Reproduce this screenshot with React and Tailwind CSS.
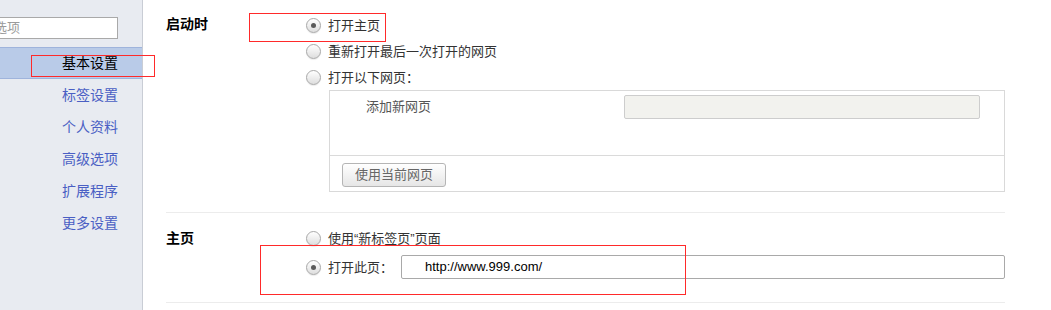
import React from "react";

const navItems = ["基本设置", "标签设置", "个人资料", "高级选项", "扩展程序", "更多设置"];

function Radio({ checked }) {
  return (
    <span className="flex h-[15px] w-[15px] shrink-0 items-center justify-center rounded-full border border-[#a8a8a8] bg-gradient-to-b from-white to-[#dedede] shadow-[0_1px_1px_rgba(0,0,0,0.08)]">
      {checked && <span className="h-[5px] w-[5px] rounded-full bg-[#5a5a5a]" />}
    </span>
  );
}

function Option({ checked, label, children, h = "h-[26px]" }) {
  return (
    <div className={`flex ${h} items-center`}>
      <Radio checked={checked} />
      <span className="ml-[7px] text-[13px] leading-none text-[#333]">{label}</span>
      {children}
    </div>
  );
}

export default function App() {
  return (
    <div
      className="relative flex h-[310px] w-[1051px] overflow-hidden bg-white"
      style={{ fontFamily: "'Liberation Sans', 'Noto Sans CJK SC', sans-serif" }}
    >
      {/* sidebar */}
      <div className="w-[143px] shrink-0 border-r border-[#c9cdd5] bg-[#e8ebf1] pt-[17px]">
        <div className="ml-[-37px] flex h-[22px] w-[155px] items-center border border-[#a9a9a9] bg-white pl-[4px] text-[13px] text-[#9a9a9a]">
          搜索选项
        </div>
        <div className="mt-[8px]">
          {navItems.map((item, i) => (
            <div
              key={item}
              className={
                i === 0
                  ? "flex h-[32px] items-center justify-end border-y border-[#9fb4dc] bg-[#b9cbe8] pr-[24px] text-[14px] text-black"
                  : "flex h-[32px] items-center justify-end pr-[24px] text-[14px] text-[#4a5fc4]"
              }
            >
              {item}
            </div>
          ))}
        </div>
      </div>

      {/* main */}
      <div className="w-[862px] pl-[23px]">
        <div className="w-[839px]">
          <div className="flex pt-[12px]">
            <div className="w-[140px] pt-[5px] text-[14px] font-bold leading-none text-black">启动时</div>
            <div className="flex-1">
              <Option checked label="打开主页" />
              <Option label="重新打开最后一次打开的网页" />
              <Option label="打开以下网页：" />
              <div className="ml-[23px] border border-[#d9d9d9]">
                <div className="flex h-[64px] items-start pt-[4px]">
                  <div className="flex h-[24px] items-center pl-[36px] text-[13px] text-[#555]">添加新网页</div>
                  <div className="ml-auto mr-[24px] h-[24px] w-[356px] rounded-[2px] border border-[#cdcdcd] bg-[#f2f2ee]" />
                </div>
                <div className="h-[36px] border-t border-[#dadada] pl-[12px] pt-[6px]">
                  <button className="h-[24px] w-[104px] rounded-[3px] border border-[#b5b5b5] bg-gradient-to-b from-white to-[#e6e6e6] text-[13px] leading-none text-[#666]">
                    使用当前网页
                  </button>
                </div>
              </div>
            </div>
          </div>

          <div className="mt-[20px] flex border-t border-[#ececec] pb-[19px] pt-[12px]">
            <div className="w-[140px] pt-[6px] text-[14px] font-bold leading-none text-black">主页</div>
            <div className="flex-1">
              <Option label="使用“新标签页”页面" />
              <Option checked label="打开此页：" h="h-[32px]">
                <div className="ml-[8px] flex h-[24px] flex-1 items-center rounded-[2px] border border-[#a9a9a9] bg-white pl-[23px] text-[13px] text-black">
                  http://www.999.com/
                </div>
              </Option>
            </div>
          </div>
          <div className="border-t border-[#ececec]" />
        </div>
      </div>

      {/* red annotation boxes */}
      <div className="pointer-events-none absolute left-[31px] top-[55px] z-10 h-[22px] w-[124px] border border-[#ff2a2a]" />
      <div className="pointer-events-none absolute left-[249px] top-[13px] z-10 h-[29px] w-[137px] border border-[#ff2a2a]" />
      <div className="pointer-events-none absolute left-[260px] top-[245px] z-10 h-[50px] w-[426px] border border-[#ff2a2a]" />
    </div>
  );
}
